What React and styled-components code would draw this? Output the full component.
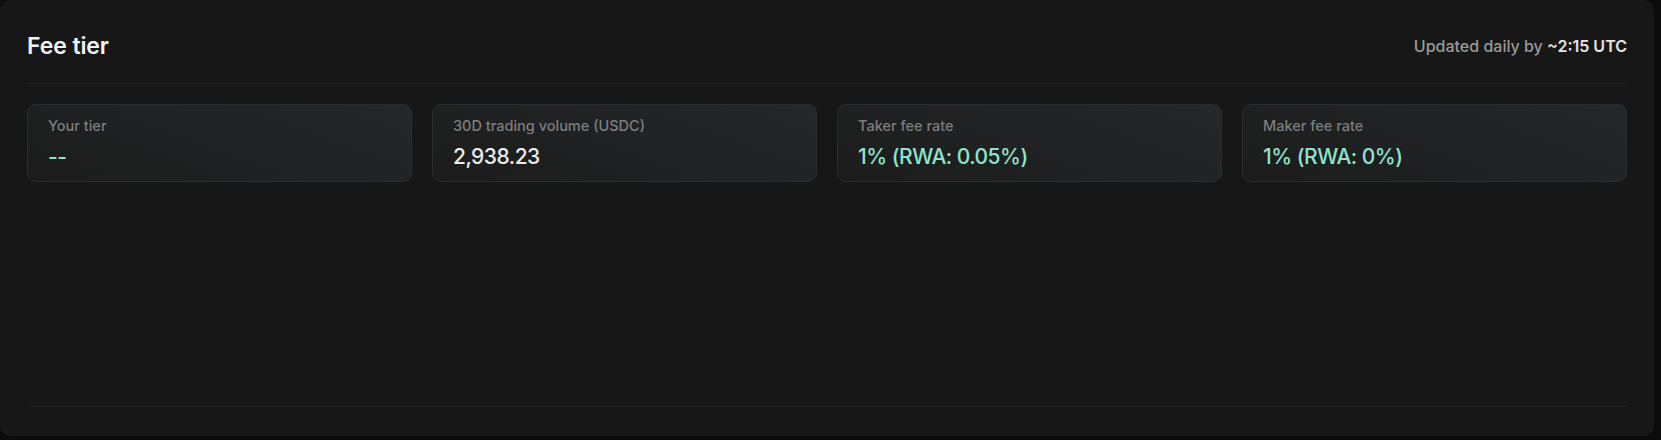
import React from "react";
import styled, { createGlobalStyle } from "styled-components";

const Global = createGlobalStyle`
  html, body { margin: 0; padding: 0; background: #0b0b0b; }
  body { font-family: Inter, "Noto Sans", sans-serif; -webkit-font-smoothing: antialiased; }
`;

const Panel = styled.section`
  box-sizing: border-box;
  width: 1654px;
  height: 436px;
  background: #171717;
  border-radius: 10px;
  padding: 0 27px;
  display: flex;
  flex-direction: column;
`;

const Header = styled.header`
  height: 84px;
  box-sizing: border-box;
  padding-top: 9px;
  display: flex;
  align-items: center;
  justify-content: space-between;
  border-bottom: 1px solid #222222;
`;

const Title = styled.h2`
  margin: 0;
  font-size: 23px;
  font-weight: 600;
  color: #f4f4f4;
  letter-spacing: -0.1px;
`;

const Note = styled.div`
  font-size: 16px;
  font-weight: 500;
  color: #9a9a9a;
  letter-spacing: 0;
`;

const Strong = styled.span`
  color: #e4e4e4;
  font-weight: 600;
`;

const Grid = styled.div`
  margin-top: 20px;
  display: grid;
  grid-template-columns: repeat(4, 1fr);
  gap: 20px;
`;

const Card = styled.div`
  box-sizing: border-box;
  height: 78px;
  border: 1px solid #2b2d2f;
  border-radius: 9px;
  background: linear-gradient(20deg, #1b1c1a 0%, #202224 55%, #25282b 100%);
  padding: 12px 20px 0;
  display: flex;
  flex-direction: column;
  gap: 10px;
`;

const Label = styled.div`
  font-size: 14.5px;
  font-weight: 500;
  color: #7d7d7d;
  letter-spacing: 0;
`;

const Value = styled.div`
  font-size: 21px;
  font-weight: 500;
  color: ${(p) => (p.$accent ? "#8fe3cd" : "#ececec")};
  letter-spacing: -0.5px;
`;

const Spacer = styled.div`
  flex: 1;
  border-bottom: 1px solid #232323;
`;

const Footer = styled.div`
  height: 29px;
`;

const stats = [
  { label: "Your tier", value: "--", accent: true },
  { label: "30D trading volume (USDC)", value: "2,938.23", accent: false },
  { label: "Taker fee rate", value: "1% (RWA: 0.05%)", accent: true },
  { label: "Maker fee rate", value: "1% (RWA: 0%)", accent: true },
];

export default function App() {
  return (
    <>
      <Global />
      <Panel>
        <Header>
          <Title>Fee tier</Title>
          <Note>
            Updated daily by <Strong>~2:15 UTC</Strong>
          </Note>
        </Header>
        <Grid>
          {stats.map((s) => (
            <Card key={s.label}>
              <Label>{s.label}</Label>
              <Value $accent={s.accent}>{s.value}</Value>
            </Card>
          ))}
        </Grid>
        <Spacer />
        <Footer />
      </Panel>
    </>
  );
}
